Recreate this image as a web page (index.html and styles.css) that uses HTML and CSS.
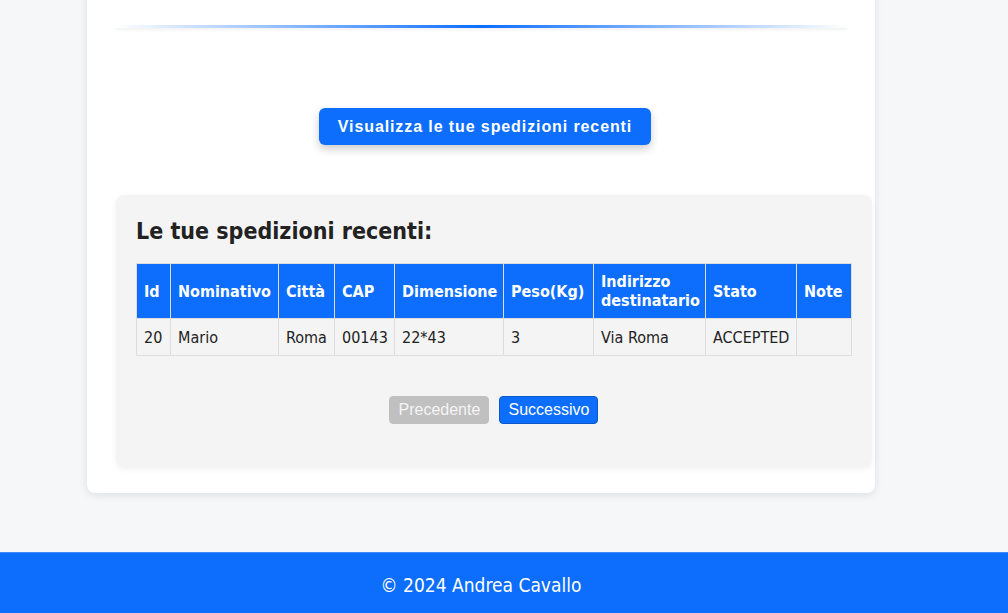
FILE: index.html
```html
<!DOCTYPE html>
<html lang="it">
<head>
<meta charset="utf-8">
<title>Spedizioni recenti</title>
<link rel="stylesheet" href="styles.css">
</head>
<body>
<div class="page">
  <main class="card">
    <hr class="divider">
    <div class="action">
      <button class="btn-main">Visualizza le tue spedizioni recenti</button>
    </div>
    <section class="recent">
      <h2 class="recent-title">Le tue spedizioni recenti:</h2>
      <table class="ship-table">
        <colgroup>
          <col class="c-id"><col class="c-nom"><col class="c-city"><col class="c-cap"><col class="c-dim"><col class="c-peso"><col class="c-ind"><col class="c-stato"><col class="c-note">
        </colgroup>
        <thead>
          <tr>
            <th>Id</th><th>Nominativo</th><th>Città</th><th>CAP</th><th>Dimensione</th><th>Peso(Kg)</th><th>Indirizzo destinatario</th><th>Stato</th><th>Note</th>
          </tr>
        </thead>
        <tbody>
          <tr>
            <td>20</td><td>Mario</td><td>Roma</td><td>00143</td><td>22*43</td><td>3</td><td>Via Roma</td><td>ACCEPTED</td><td></td>
          </tr>
        </tbody>
      </table>
      <div class="pager">
        <button class="pg pg-prev" disabled>Precedente</button>
        <button class="pg pg-next">Successivo</button>
      </div>
    </section>
  </main>
</div>
<footer class="footer">© 2024 Andrea Cavallo</footer>
</body>
</html>
```
FILE: styles.css
```css
html, body {
  margin: 0;
  padding: 0;
}
body {
  background: #f6f7f9;
  font-family: "DejaVu Sans Condensed", "DejaVu Sans", sans-serif;
  color: #222;
  height: 613px;
  overflow: hidden;
  display: flex;
  flex-direction: column;
}
.page {
  display: flex;
  justify-content: center;
  padding-left: 87px;
  padding-right: 133px;
  flex: 0 0 auto;
}
.card {
  width: 788px;
  box-sizing: border-box;
  margin-top: -20px;
  background: #fff;
  border-radius: 8px;
  box-shadow: 0 2px 8px rgba(0, 0, 0, 0.1);
  padding: 45px 28px 26px 28px;
}
.divider {
  margin: 0;
  border: 0;
  height: 3px;
  background: linear-gradient(to right, rgba(13, 110, 253, 0), #0d6efd 50%, rgba(13, 110, 253, 0));
  box-shadow: 0 2px 3px rgba(0, 0, 0, 0.06);
}
.action {
  display: flex;
  justify-content: center;
  padding-left: 8px;
  margin-top: 80px;
}
.btn-main {
  width: 332px;
  height: 37px;
  background: #0d6efd;
  color: #fff;
  border: 0;
  border-radius: 6px;
  font-family: "Liberation Sans", Arial, sans-serif;
  font-weight: bold;
  font-size: 16px;
  letter-spacing: 0.9px;
  box-shadow: 0 4px 8px rgba(0, 0, 0, 0.2);
  padding: 0;
}
.recent {
  margin-top: 50px;
  margin-left: 1px;
  width: 756px;
  box-sizing: border-box;
  background: #f4f4f4;
  border-radius: 8px;
  padding: 22px 20px 20px 20px;
  box-shadow: 0 2px 6px rgba(0, 0, 0, 0.06);
}
.recent-title {
  margin: 0 0 18px 0;
  font-size: 23px;
  line-height: 28px;
  font-weight: bold;
  color: #222;
}
.ship-table {
  width: 715px;
  border-collapse: collapse;
  table-layout: fixed;
  font-size: 16px;
}
.c-id { width: 34px; }
.c-nom { width: 108px; }
.c-city { width: 56px; }
.c-cap { width: 60px; }
.c-dim { width: 109px; }
.c-peso { width: 90px; }
.c-ind { width: 112px; }
.c-stato { width: 91px; }
.c-note { width: 55px; }
.ship-table th,
.ship-table td {
  border: 1px solid #ddd;
  padding: 8px 7px;
  text-align: left;
  line-height: 19px;
  overflow: hidden;
  white-space: nowrap;
}
.ship-table th {
  background: #0d6efd;
  color: #fff;
  font-weight: bold;
  white-space: normal;
  line-height: 19px;
}
.ship-table td {
  color: #222;
  padding-top: 9px;
  padding-bottom: 8px;
}
.pager {
  display: flex;
  justify-content: center;
  gap: 10px;
  margin-top: 40px;
  margin-bottom: 23px;
  padding-right: 2px;
}
.pg {
  height: 28px;
  padding: 0 9px;
  font-family: "Liberation Sans", Arial, sans-serif;
  font-size: 16px;
  border-radius: 4px;
  color: #fff;
}
.pg-prev {
  width: 100px;
  background: #c0c0c0;
  border: 1px solid #c0c0c0;
  color: #f4f4f4;
}
.pg-next {
  width: 99px;
  background: #0d6efd;
  border: 1px solid #0a58ca;
}
.footer {
  margin-top: auto;
  height: 61px;
  background: #0d6efd;
  border-top: 1px solid #3d8bfd;
  box-sizing: border-box;
  color: #fff;
  font-size: 19px;
  display: flex;
  align-items: center;
  justify-content: center;
  padding: 4px 46px 0 0;
}
```
